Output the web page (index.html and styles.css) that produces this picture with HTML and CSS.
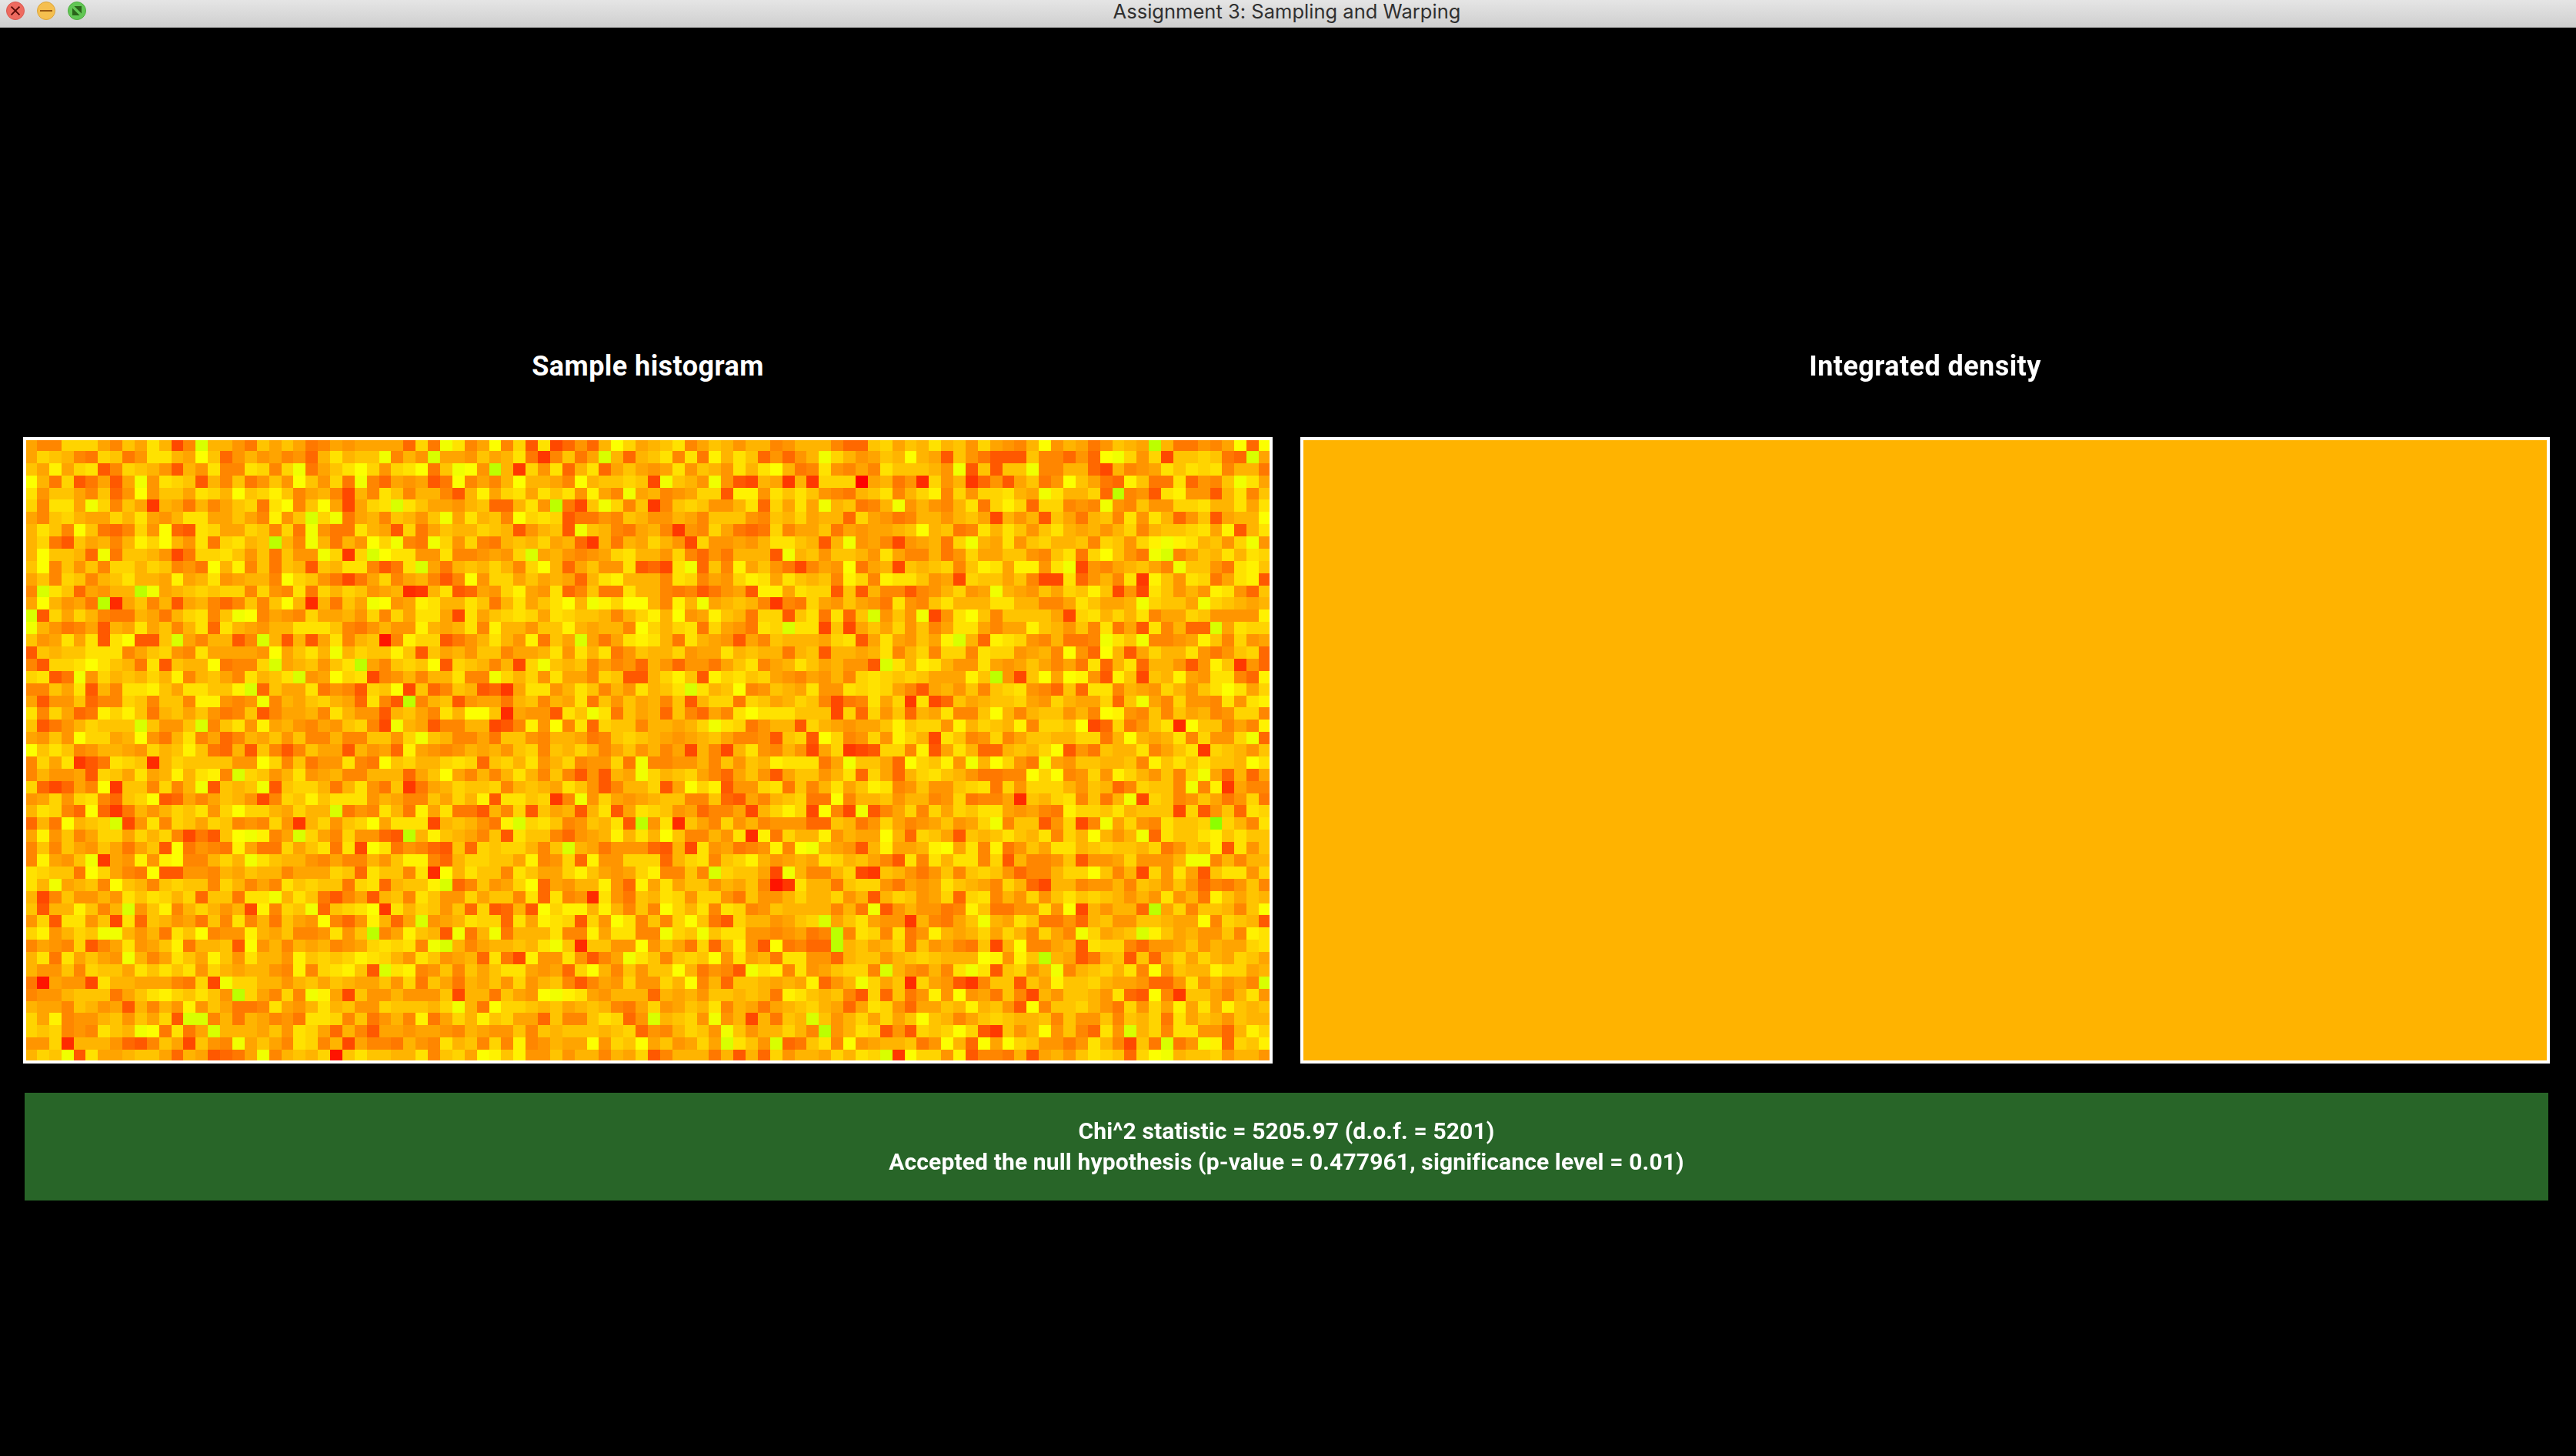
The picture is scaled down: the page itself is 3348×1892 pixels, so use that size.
FILE: index.html
```html
<!DOCTYPE html>
<html lang="en">
<head>
<meta charset="utf-8">
<title>Assignment 3: Sampling and Warping</title>
<link rel="stylesheet" href="styles.css">
</head>
<body>
<header class="titlebar">
  <div class="controls">
    <svg class="control" viewBox="0 0 24 24"><circle cx="12" cy="12" r="11.5" fill="#ee6a5f" stroke="#d95850"/><path d="M6.6 6.6 17.4 17.4M17.4 6.6 6.6 17.4" stroke="#5a0b08" stroke-width="2"/></svg>
    <svg class="control" viewBox="0 0 24 24"><circle cx="12" cy="12" r="11.5" fill="#f5bf4f" stroke="#dba43b"/><path d="M4 12H20" stroke="#985712" stroke-width="2"/></svg>
    <svg class="control" viewBox="0 0 24 24"><circle cx="12" cy="12" r="11.5" fill="#61c654" stroke="#4fae40"/><path d="M8.4 6H18V15.6ZM6 8.4V18H15.6Z" fill="#2a641a"/></svg>
  </div>
  <h1 class="title">Assignment 3: Sampling and Warping</h1>
</header>
<main class="content">
  <div class="plots">
    <section class="plot">
      <h2 class="heading">Sample histogram</h2>
      <canvas class="frame" id="histogram" width="1616" height="806"></canvas>
    </section>
    <section class="plot">
      <h2 class="heading">Integrated density</h2>
      <div class="frame density"></div>
    </section>
  </div>
  <div class="result">
    <p class="line">Chi^2 statistic = 5205.97 (d.o.f. = 5201)</p>
    <p class="line">Accepted the null hypothesis (p-value = 0.477961, significance level = 0.01)</p>
  </div>
</main>
<script src="histogram.js"></script>
</body>
</html>
```
FILE: styles.css
```css
* { box-sizing: border-box; }
body {
  margin: 0;
  height: 1892px;
  overflow: hidden;
  background: #000;
  color: #fff;
  font-family: Roboto, sans-serif;
}
.titlebar {
  display: grid;
  grid-template-columns: 1fr auto 1fr;
  height: 36px;
  background: linear-gradient(#e5e5e5, #cfcfcf);
  border-bottom: 1px solid #adadad;
}
.controls {
  display: flex;
  gap: 16px;
  padding: 2px 0 0 8px;
}
.control {
  display: block;
  width: 24px;
  height: 24px;
}
.title {
  margin: 0;
  padding-right: 3px;
  color: #303030;
  font: 400 25.5px/29px Inter, sans-serif;
  letter-spacing: 0.02px;
  white-space: nowrap;
}
.content { padding: 403px 34px 0 30px; }
.plots {
  display: flex;
  gap: 36px;
}
.plot { width: 1624px; }
.heading {
  margin: 0;
  height: 129px;
  padding-top: 1px;
  font-size: 36px;
  font-weight: 700;
  line-height: 72px;
  letter-spacing: 0.43px;
  text-align: center;
}
.frame {
  display: block;
  box-sizing: border-box;
  width: 1624px;
  height: 814px;
  border: 4px solid #fff;
}
.density { background: #ffb300; }
.result {
  width: 3280px;
  height: 140px;
  margin: 38px 0 0 2px;
  padding-top: 30px;
  background: #286528;
  text-align: center;
}
.line {
  margin: 0;
  font-size: 30px;
  font-weight: 700;
  line-height: 40px;
  letter-spacing: 0.14px;
  white-space: nowrap;
}
```
FILE: histogram.js
```js
// Bin levels, one symbol per bin: 0 is the fullest (red), k the emptiest (green).
const rows = `
a88ddda8caeb48ibb97caca78a9aaaa6d7 he8ag8d5e4696bgdabce8acb9bb89bbb86 6cdacbebc9da98bg9ba79cbajb7798ag6g
adcb87dc79eebagc69b9a896bebcch8b9i aa9cabe738c7aib6bce8e7fbec6969bhdb 9acbgba5c97555c88696ghd9d4ccdc76ia9
cafade58dcb95b9e88ed8dh7acegd9deg7 chg9jb3d9e6be6aca9ae9cb9ebegb78e98 a8ecccb9h5c5cch88bb64b89aecede8bb74
gb7d57a5ah9edc5b8c79c9gc9d7h86a9a5 7g8a8bgbba8gbccdc4hcb9h954ba3b3ddd 0ab792d9b3695ac79gca76fc77e698chea
e9cca8c69g9ccaedbgcdfc8ab84b8ec8bb 85bfadeaece9fa8hab89add5ff9ecec987 bce8bdf8d9ddebahebbd6j895ef995be8c
d8eeahd8ca3ba7b8acd7eg8cga4adeieca a9bc66be9j74chd8c38cdc99be6daeahbc 78bh9b98be7dfd6dd898h98c99ddebbeae
a8cdbaadbea9beeaaca8f9cidh7ab8cb9c haebc8gded57798cb99ba8ccc98cbdabb6 da978bb9bca4b9b5ca7bc8e9eb69c5abbg
bec8gc768d9g65edaadc8d7h977eba5d7a cbbdcb59bc5hcb87ab8398da767d8aac7a 9aabcgbc78ebec9cebab9bd8bccdeaf5be
bd75cab8bfdgb9e7debcjb8hb7b9gdh87h d9d87bcbdab63b7badb94d99a9beecb5bh 9a849ab7dhbae9cdbbc8dc9dfhfebc9dh9
bgccb6h7ccb947ddec9c7c99hd3digee99 e889a9diab989adebb9d8697bbb5hbc9cc b9ea88b79daacc98ce7dgc97hi8acbebed
cg8c9c8ddbdc897gbf8c7cb5cbee857eia 7bcbdb8dgb6ac99e564eh6c8fac9748a9g 7ab4cbcd8cfeaff9eh498abca8hcc97efc
ac8dc8bcebbafabe9abb8gdc9747ad8ab8 58g9ddacaba6befbbb8ed8a9dfeaecbc8f d8feec9a4dccac844e69b8e3fc9ed7aef5
8iec6a9bbjhabcdcdd8d98e7dbdc9ab23b e56a9dfa9e68c77ebb878579a5ffaedd5c 5b88589bd9ahba9cadcfc494ec9b9fe96c
agb9a7j2ac8b5ab868c8cgb2b7cahg9afe bbec7beacegbhfdggb8fbhabcb8387da9c a97e98cebbbeebb88aecaabhdccahdcbab
i5dadb877ba7bde8chg8a98daab9d8daee a4eacdedaedccb8bdfbg9afcb7dd5ce7e6 ci9c9h49egc8cccca4debdbe8aadc9999f
hb978a5baeac8be6eba9bbeeec879b99fb abe8fbb9ccfbabb8gdbde7da97edieе4c4 acad9c8aeea8aafcb9c8e7a5e8b66iaedd
c9aeae5eg55cia8bb58ib5b5ae8bc18fdd 579beb9f7caia7aefeb7eba95a8cbbbade 5aea9cafib6fed98b778hech889afc8d9a
5cbcceee8acd98eaaaa9gacebhbdccfc5c ab9cc8aabe9ebe79cbbd9aaebcbb7bc5bb abe8bd8dd8edd9ab8g96gb5adbbe979cd6
85ddegecb7e5cbbg788diabc9ceja8cdcg 5dcb8b4dhcbc8a896b96997ace8abecab9 95iebfeb99ea9aca8a7e6be6bb959fc396
de57h9dbcbdbf8bca8ebcei9agde489b8b be88hdbd9eaa8dc55bdfc5fdecda98a9b8 dedcdcaaafcj94cgagf95fc4cbfa9ee86f
88cae5b8eefcaeeccfi6caae7985dcg4c6 8cb563aee9bec8b9ebceiebcg89cbae99e deda85ab9c8cde986c6ee8ba9db9cegead
a599c688dc8cc8ff989h8bacdba6e85j8b c59aa7bc8bae7c9cab8c5bdd7dcabdc847 8ead3e46cabccda9dbaad6cha8d998e9ef
e8da67fdfc7bcac978c58aab8eb995bca8 ebggc2a995eche7cab6c86a8egeeeccc4d 6d9c6bae88cgb8bcc9b8gf98c8cab89dd8
c579bdcccic99ci8ce9fab98a9cd84hba5 88bb458f9g8e6dcc8bbabdhed79bb5dba9 aacfcdd9fbdcbf8ddcg46d79ce2gcc8a8f
a9c9gddabg97be8a68bac9c88b88cc9dhc b88a7cc98bba78cdcba9abca8895cd5gd8 9d9fdb4ec89d8accbbdd7bgbabe8d99dh6
gcec89bba9dbcfc76b5c858caa5b9a6fa9 89bab9cd8cbdb8ac9b8a4b84be98b94ad3 45dd8f5aeb66bcbdg597cbbe8ace3dcb9c
8dae357edc2bdcccc99gd8c799e87gcdbb ded6cdbe9bd899d7h8899b8c9cbfeee7ah cca6gdcf9hbgd97ha9ccbbc8fcececcbge
8b99a5dcaeabfbef8idc9be9ab88bbb6ac ga8b8beb8c8595bahdbcda86ac95acc9be 6da6bdecb97788gdg89d9fdb9c8dha6b6a
d646a8g3cc8d8bh5cbch5cddb7be97c37a bdccd8bcbaec958bbd5agdf599de7c8bea cfe89c99cde7d9dddb9cb68dcc8h8f3a88
9ad9de86cdg56a8acb948dcfceee9ba88c adbf5eecd38h9da9abcc88c65a8bcd77g8 bbc9bb89d788a2cbde8c7bh4dc89ca79d7
bed86g637b9bdce9dgddbadbbi798eb7fa e775b8d5cab5be5aedc9a688a4bdfd4g84 h58ad8dadceea9a87fddcebccc4d59c6ed
6b7gbcdi49e8dcadc898d93bd9cdgaeee4 bcb97fidec89cbe5j9e2ca8d9b899966cb 79da89ac9adh8cc59d48had98eccdkdb8e
af9c8addadbd8475cghf8aida8d9965jbf cba8c5ecc869abfbebgc88b9e2f7dbbf9b aagb6dca5cbcecbe8dbgb9bh6eccefcecc
8c8ca9ca7ac5g7987fa77dace7e4ge7986 5c6dcddb8ciba799965b4e9a789f8ghba9 5bfaabfgae8f79caeebcdccbd79cbf5e9c
8fa9ch3a9f9fg88bdbhecbb98a88b9cff8 6bddccaf89d6f99ddd6bde8cdfb9abaedb ca85e8ebee8d5b889c599ad999bhh8b8bb
edcc7gda87g55998bacbb8aaadc6ecc8e2 gbecc8ecaadfca9adf88c8idcca4hb88bd 43cb979c8cdc9688bddgc8b4d9ea5cee9d
ebhabc8gcb8cdcc8db8a8ecdcc7de6bccf i68c9adg6a9bbf96faeacc9bac813ebb7c dd97a9aecba8db64bb899b8cb9c96879c8
b48c99b9ecedbd6cc7eehbec758a5bc8ec 99dacc8e6e892e97cbed9dd97c99bdbbd9 b5bdc9ad6de8b9d9cecdcb9b9e9b7fcacb
c5bbfc8bi9cf8bdb9b4f8dch6cdeg3ebdc 9c6d56b5gdffbfb8c8gdbe8ed89cbbbb8b 7h59b9978fc7799e9g4b9bb6jad8ccb8cg
9d5ee9c4e6cb9a7c8e8b7ca9g869fb6ai9 abedd6eafed5d9ge8c8dgc75dbb9acdiac ea993b87achbaec7796bc99ccbaag8dcb5
df9bdchhb9b7ecg899fbac889e9cj8afcb 5h7bh7bbbe88faee88hdchcee9989a78j8 ed8e79fbabdadb8da8hdabcifcab99c8fe
8a98d58ae9acf7bbc5g9b8bab89adede8h ib8abbcbehc2cc99g9ca7d6bf95g7866jb cabd7c9a87c4bg88ab5edd8699ac9baade
be7eaca9hb8aecafc9ebb9fcdcdfedb9ec 9ab6e74f99e958ahec8cdcg9eab7ee996b cc9bcdcbbbgf9fcjba57bc5c6bdadbadca
b99c8dccaecece9dbabb98f8defc5ief89 c8caceea9a6dgb8c9ccgb7985hef8e9acd d8ib98b8ehe5cd9bh8bcdbe8g9cbbfddab
71a994ebbaaa87d4hddbb9bcacbaac9d7c a7bac9d9bc858a9d99dbg8b6ccbabaf69b hdac2da9538cc5cafccdbaa9669e9b9a8i
899bccc7acefdcec9jda8d8hfa4c99b999 c4bb7ca9ghfea9bbb6bab9ccbcb7fecbc8 5d6c79f9g9a7c84b9ccb9e65g83cca8be9
baa8cb9a5b8b9f9ca778ea9bebc99dcccb dhb7gddcbcabcb87ad9acbe8ba7abcdba6 aed96aacbfbc95g8ccdb97d9dafaeafcbc
daf899bc9cad5ii8b7ba897eed8c79b8f7 adbfcdaa6c88ced69ibcd9h9b4b7cbic9b dadacgcb8acdcbbc8c99c8cbd7eacb9cbb
dcd898ecbhg7e7aibbbac9eda6b85aa9aa 98ba99c8cbcccbcd698bdc9hc9bbdb8j9b ed595dcdgd53c9bg9c86e9ibd8ee996bfd
99d2bbb9658ca4c98haca8ed8b4a887b98 ebc8d8f89baag9dcgac9adaiec9i67ce8g 9abbc79gb6gagdc9979eb84c7i79hf6dcf
bdch5eaabcca6ba567ah8bcbd1ceccbbe8 cdagfcf99c9bb8bad58bbb7b5b6d9bbadb edi3gdd9f5887b5ab9cedc6dghbccd9bb9
`.trim().split('\n').map(line => line.replace(/\s/g, ''));

const greens = [0, 20, 43, 56, 72, 88, 104, 120, 134, 149, 164, 180, 196, 212, 226, 242];
const pale = { g: '#fcff00', h: '#f0ff00', i: '#d8ff00', j: '#bcff00', k: '#8cff00' };
const ctx = document.getElementById('histogram').getContext('2d');
// The grid is 1620 x 810; the frame covers its outer two pixels.
const edge = i => Math.round(i * 810 / 51) - 2;
for (let y = 0; y < 51; y++) {
  for (let x = 0; x < 102; x++) {
    const s = rows[y][x] || 'b';
    ctx.fillStyle = pale[s] || `rgb(255,${greens[parseInt(s, 16)] ?? 226},0)`;
    ctx.fillRect(edge(x), edge(y), edge(x + 1) - edge(x), edge(y + 1) - edge(y));
  }
}
```
